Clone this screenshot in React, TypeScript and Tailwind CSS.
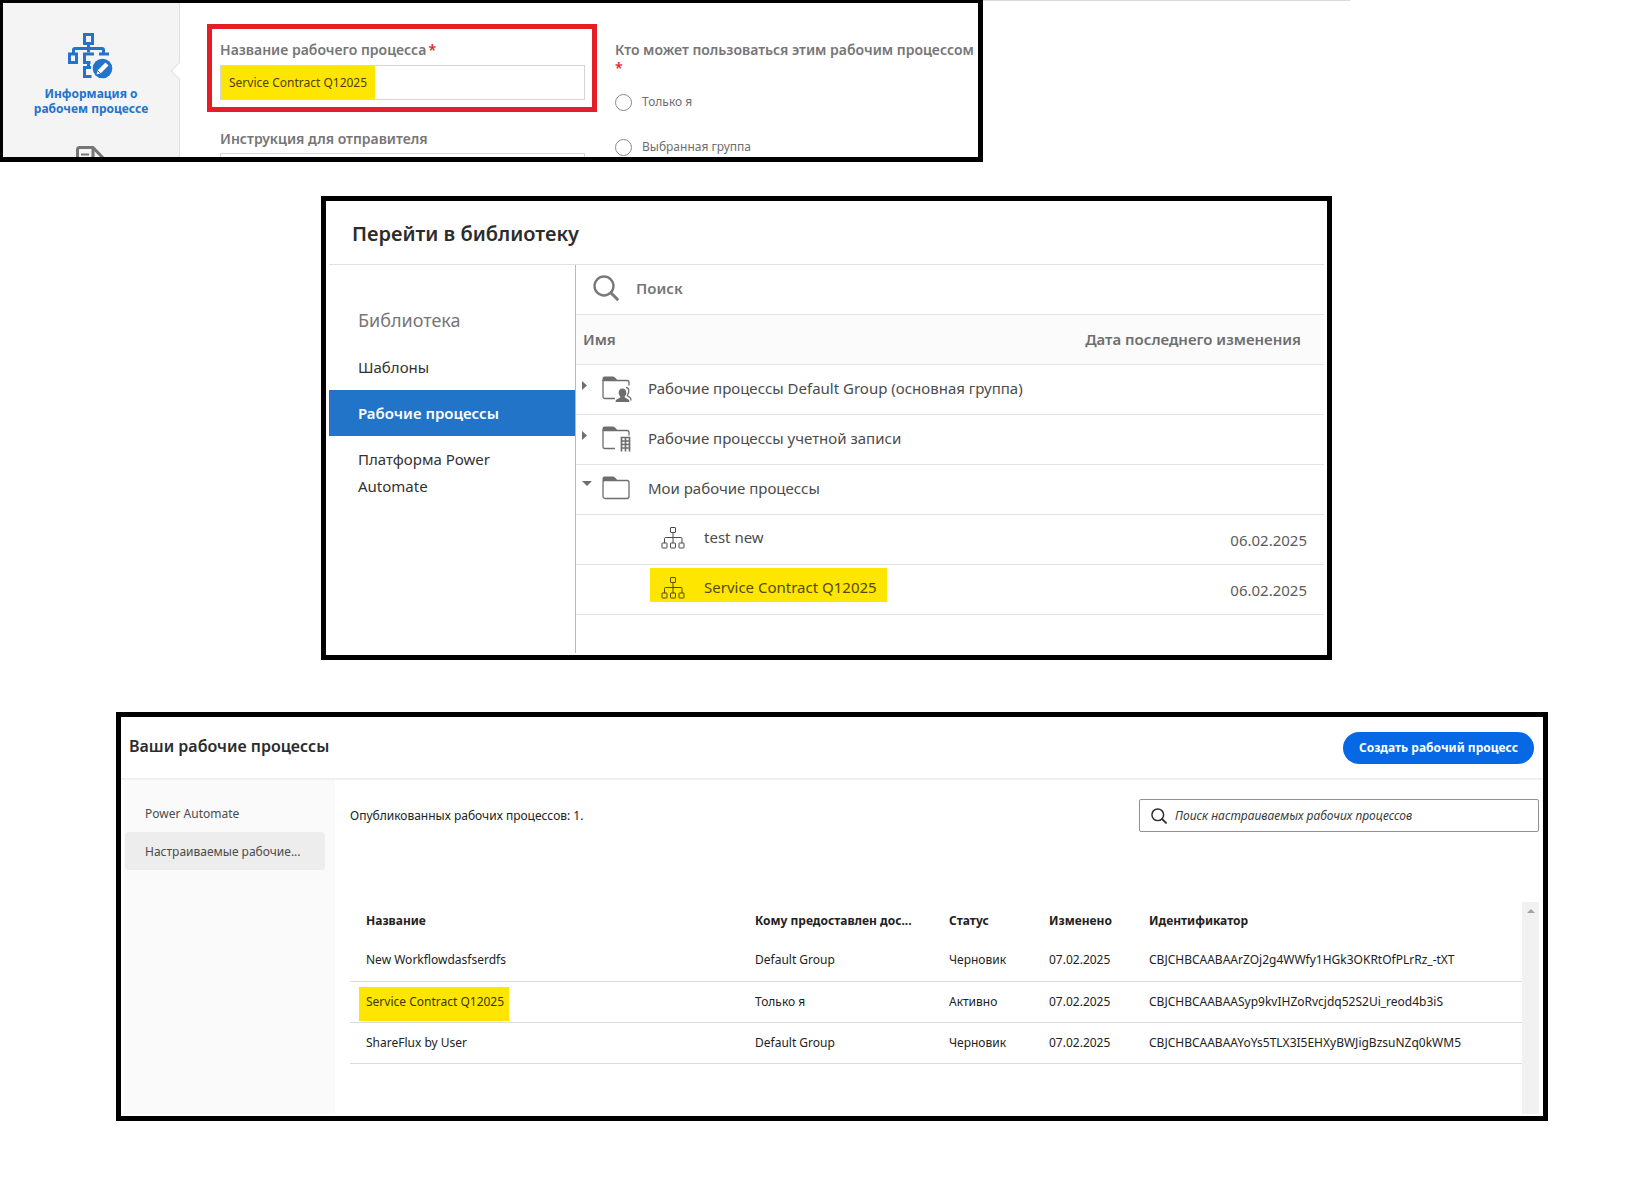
import type { ReactNode } from "react";

const workflows = [
  {
    name: "New Workflowdasfserdfs",
    sharedWith: "Default Group",
    status: "Черновик",
    modified: "07.02.2025",
    id: "CBJCHBCAABAArZOj2g4WWfy1HGk3OKRtOfPLrRz_-tXT",
  },
  {
    name: "Service Contract Q12025",
    sharedWith: "Только я",
    status: "Активно",
    modified: "07.02.2025",
    id: "CBJCHBCAABAASyp9kvIHZoRvcjdq52S2Ui_reod4b3iS",
    highlighted: true,
  },
  {
    name: "ShareFlux by User",
    sharedWith: "Default Group",
    status: "Черновик",
    modified: "07.02.2025",
    id: "CBJCHBCAABAAYoYs5TLX3I5EHXyBWJigBzsuNZq0kWM5",
  },
];

const folders = [
  { name: "Рабочие процессы Default Group (основная группа)", badge: "group", open: false },
  { name: "Рабочие процессы учетной записи", badge: "account", open: false },
  { name: "Мои рабочие процессы", badge: "none", open: true },
];

const libraryItems = [
  { name: "test new", date: "06.02.2025", highlighted: false },
  { name: "Service Contract Q12025", date: "06.02.2025", highlighted: true },
];

function WorkflowInfoIcon() {
  return (
    <svg width="46" height="46" viewBox="0 0 46 46" fill="none" aria-hidden="true">
      <g stroke="#2273c9" strokeWidth="3">
        <path d="M16.5 1.5h8v9h-8z" />
        <path d="M20.5 10.5v9" />
        <path d="M5.5 20v-3q0-1.5 1.5-1.5h27q1.5 0 1.5 1.5v3" />
        <path d="M1.5 21h7v8.500h-7z" />
        <path d="M26 21h-9.500v8.500h6" />
        <path d="M31 21h10" />
        <path d="M20.5 29.500v5M24 34.500h-7.500v9h7" />
      </g>
      <circle cx="34.5" cy="35.5" r="11.500" fill="#f4f4f4" />
      <circle cx="34.5" cy="35.5" r="9.800" fill="#2273c9" />
      <path d="M28.500 41.500l1.500-4.500 7.500-7.500 3 3-7.500 7.500z" fill="#fff" />
      <path d="M30 38l2 2" stroke="#2273c9" strokeWidth="1" />
    </svg>
  );
}

function DocumentIcon() {
  return (
    <svg width="30" height="32" viewBox="0 0 30 32" fill="none" stroke="#767676" aria-hidden="true">
      <path d="M1.500 31V3.500q0-2 2-2H17L28 13v18" strokeWidth="3" />
      <path d="M17 1.500V13h11" strokeWidth="3" />
      <path d="M5 8.500h8M5 13h8" strokeWidth="2" />
    </svg>
  );
}

function SearchIcon({ className }: { className: string }) {
  return (
    <svg className={className} viewBox="0 0 26 26" fill="none" stroke="currentColor" aria-hidden="true">
      <circle cx="11" cy="11" r="9.500" strokeWidth="2.400" />
      <path d="M17.800 17.800l6.500 6.500" strokeWidth="3" strokeLinecap="round" />
    </svg>
  );
}

function FolderIcon({ badge }: { badge: string }) {
  return (
    <svg width="30" height="28" viewBox="0 0 30 28" fill="none" aria-hidden="true">
      <path d="M.5 5V2.500Q.5.500 2.500.500h8.500q1.500 0 2.500 1.500l2.500 3z" fill="#6e6e6e" />
      {badge === "none" ? (
        <rect x="1" y="4.500" width="26" height="18" rx="2" stroke="#6e6e6e" strokeWidth="1.300" />
      ) : (
        <path
          d="M13 22.500H3q-2 0-2-2V4.500h24q2 0 2 2v3"
          stroke="#6e6e6e"
          strokeWidth="1.300"
        />
      )}
      {badge === "group" && (
        <g fill="#6e6e6e">
          <path d="M20.500 12.500c2.600 0 3.800 1.900 3.800 4.200 0 1.800-.8 2.900-1.500 3.600v1.200l3.700 2q1 .6 1 2.500h-14q0-1.900 1-2.500l3.700-2v-1.200c-.7-.7-1.500-1.800-1.500-3.600 0-2.300 1.200-4.200 3.800-4.200z" />
          <path
            d="M24 11.500c2 .3 3 2 2.800 4-.1 1.600-.8 2.500-1.300 3.200v1.300l2.700 1.800q.8.700.8 2.700"
            stroke="#6e6e6e"
            strokeWidth="1.300"
            fill="none"
          />
        </g>
      )}
      {badge === "account" && (
        <path
          d="M19.500 11v14.500M23.500 11v14.500M27.500 11v14.500M18.700 11.500h9.600M18.700 15h9.600M18.700 18.500h9.600M18.700 22h9.600"
          stroke="#6e6e6e"
          strokeWidth="1.700"
        />
      )}
    </svg>
  );
}

function TreeIcon() {
  return (
    <svg width="25" height="22" viewBox="0 0 25 22" fill="none" stroke="currentColor" aria-hidden="true">
      <rect x="9.500" y=".5" width="5" height="5" rx=".5" />
      <rect x="1" y="16" width="5" height="5" rx=".5" />
      <rect x="9.500" y="16" width="5" height="5" rx=".5" />
      <rect x="18" y="16" width="5" height="5" rx=".5" />
      <path d="M12 5.500V16M3.500 16v-4.500q0-1 1-1h15.500q1 0 1 1V16" />
    </svg>
  );
}

function Radio({ label }: { label: string }) {
  return (
    <label className="flex h-[18px] items-center gap-[10px] text-[12px] text-[#6e6e6e]">
      <input
        type="radio"
        name="audience"
        className="h-[17px] w-[17px] appearance-none rounded-full border border-[#8a8a8a] bg-white"
      />
      {label}
    </label>
  );
}

function WorkflowForm() {
  return (
    <section className="flex h-[162px] min-w-0 flex-1 overflow-hidden border-t-3 border-r-5 border-b-5 border-l-3 border-black">
      <nav className="relative flex w-[177px] shrink-0 flex-col items-center border-r border-[#e0e0e0] bg-[#f4f4f4] pt-[30px]">
        <a href="#info" className="flex flex-col items-center text-center text-[12px] leading-[15px] font-bold text-[#2273c9]">
          <WorkflowInfoIcon />
          <span className="mt-[7px] w-[130px]">Информация о рабочем процессе</span>
        </a>
        <a href="#documents" aria-label="Документы" className="mt-[30px]">
          <DocumentIcon />
        </a>
        <span className="absolute top-[62px] -right-[6px] h-3 w-3 rotate-45 border-b border-l border-[#e0e0e0] bg-white" />
      </nav>
      <div className="flex min-w-0 flex-1">
        <div className="ml-[27px] w-[390px] shrink-0 pt-[21px]">
          <div className="h-[88px] border-5 border-[#e31e26] pt-[11px] pr-[7px] pl-2">
            <label htmlFor="workflow-name" className="block text-[14px] leading-[20px] font-semibold text-[#767676]">
              Название рабочего процесса<span className="ml-[2px] text-[#e31e26]">*</span>
            </label>
            <div className="mt-[5px] flex h-[35px] border border-[#d5d5d5]">
              <input
                id="workflow-name"
                defaultValue="Service Contract Q12025"
                className="w-[154px] bg-[#ffe600] px-2 text-[12px] text-[#4b4000] outline-none"
              />
            </div>
          </div>
          <div className="pt-[17px] pr-3 pl-[13px]">
            <label htmlFor="instruction" className="block text-[14px] leading-[20px] font-semibold text-[#767676]">
              Инструкция для отправителя
            </label>
            <textarea id="instruction" className="mt-1 h-16 w-full resize-none border border-[#d5d5d5]" />
          </div>
        </div>
        <fieldset className="ml-[18px] min-w-0 flex-1 pt-[38px]">
          <legend className="float-left text-[14px] leading-[18px] font-semibold whitespace-nowrap text-[#767676]">
            Кто может пользоваться этим рабочим процессом
            <br />
            <span className="text-[#e31e26]">*</span>
          </legend>
          <div className="clear-both flex flex-col gap-[27px] pt-4">
            <Radio label="Только я" />
            <Radio label="Выбранная группа" />
          </div>
        </fieldset>
      </div>
    </section>
  );
}

function LibraryLink({ active, children }: { active?: boolean; children: ReactNode }) {
  return (
    <a
      href="#library"
      className={
        active
          ? "block bg-[#2174c8] pt-[10px] pr-10 pb-[9px] pl-[29px] font-semibold text-white"
          : "block pt-[10px] pr-10 pb-[9px] pl-[29px] text-[#323232]"
      }
    >
      {children}
    </a>
  );
}

function LibraryPanel() {
  return (
    <section className="mr-[309px] ml-[321px] flex h-[464px] flex-col border-5 border-black px-[3px] text-[15px]">
      <h2 className="flex h-[64px] shrink-0 items-center border-b border-[#e1e1e1] pt-[2px] pl-[23px] text-[20px] font-semibold text-[#2c2c2c]">
        Перейти в библиотеку
      </h2>
      <div className="mb-[2px] flex flex-1">
        <nav className="w-[247px] shrink-0 border-r border-[#b9b9b9] pt-[42px] leading-[27px]">
          <h3 className="mb-[10px] pl-[29px] text-[18px] text-[#767676]">Библиотека</h3>
          <LibraryLink>Шаблоны</LibraryLink>
          <LibraryLink active>Рабочие процессы</LibraryLink>
          <LibraryLink>Платформа Power Automate</LibraryLink>
        </nav>
        <div className="min-w-0 flex-1">
          <label className="flex h-[50px] items-center gap-[17px] border-b border-[#e3e3e3] pb-[3px] pl-[17px] text-[#7a7a7a]">
            <SearchIcon className="h-[26px] w-[26px]" />
            <input
              type="search"
              placeholder="Поиск"
              className="min-w-0 flex-1 font-semibold outline-none placeholder:text-[#767676]"
            />
          </label>
          <table className="w-full border-collapse text-[#4b4b4b]">
            <thead>
              <tr className="h-[49px] border-b border-[#e3e3e3] bg-[#fbfbfb] text-[#6e6e6e]">
                <th className="pl-[7px] text-left font-semibold">Имя</th>
                <th className="pr-[23px] text-right font-semibold">Дата последнего изменения</th>
              </tr>
            </thead>
            <tbody>
              {folders.map((folder) => (
                <tr key={folder.name} className="h-[50px] border-b border-[#e3e3e3]">
                  <td colSpan={2}>
                    <button type="button" className="flex items-center pl-[6px] text-left">
                      <svg width="10" height="10" viewBox="0 0 10 10" fill="#6e6e6e" className="mb-2" aria-hidden="true">
                        {folder.open ? <path d="M0 1h10L5 6z" /> : <path d="M0 1l5 4.500L0 10z" />}
                      </svg>
                      <span className="mr-4 ml-[10px] pt-px">
                        <FolderIcon badge={folder.badge} />
                      </span>
                      <span className="pb-[2px]">{folder.name}</span>
                    </button>
                  </td>
                </tr>
              ))}
              {libraryItems.map((item) => (
                <tr key={item.name} className="h-[50px] border-b border-[#e3e3e3]">
                  <td className="pl-[74px] align-top">
                    <div
                      className={
                        item.highlighted
                          ? "mt-[3px] flex h-[34px] w-fit items-center gap-[18px] bg-[#ffe600] pt-[7px] pr-[10px] pb-px pl-[11px] text-[#544b00]"
                          : "mt-[3px] flex h-[34px] w-fit items-center gap-[18px] pt-[7px] pr-[10px] pb-px pl-[11px]"
                      }
                    >
                      <TreeIcon />
                      {item.name}
                    </div>
                  </td>
                  <td className="pt-[2px] pr-[17px] text-right text-[#5c5c5c]">{item.date}</td>
                </tr>
              ))}
            </tbody>
          </table>
        </div>
      </div>
    </section>
  );
}

function WorkflowsPanel() {
  return (
    <section className="mr-[93px] ml-[116px] flex h-[409px] flex-col border-5 border-black text-[12px] text-[#222222]">
      <header className="flex h-[63px] shrink-0 items-center justify-between border-b-2 border-[#f0f0f0] pr-[9px] pl-2">
        <h2 className="pb-1 text-[16px] font-semibold text-[#2c2c2c]">Ваши рабочие процессы</h2>
        <button type="button" className="h-8 rounded-full bg-[#0668e4] px-4 text-[12px] font-bold text-white">
          Создать рабочий процесс
        </button>
      </header>
      <div className="mb-[2px] flex min-h-0 flex-1">
        <nav className="ml-[3px] w-[211px] shrink-0 bg-[#fafafa] pt-[14px] text-[12px] text-[#4b4b4b]">
          <a href="#power-automate" className="flex h-[38px] items-center pt-px pl-[21px]">
            Power Automate
          </a>
          <a href="#custom" className="mr-[10px] ml-px flex h-[38px] items-center rounded bg-[#ededed] pt-px pl-5">
            Настраиваемые рабочие...
          </a>
        </nav>
        <div className="flex min-w-0 flex-1 flex-col pr-1 pl-[15px]">
          <div className="mt-[19px] flex h-[33px] shrink-0 items-center justify-between">
            <p>Опубликованных рабочих процессов: 1.</p>
            <label className="flex h-[33px] w-[400px] items-center gap-2 rounded-[2px] border border-[#909090] px-[11px] text-[#2c2c2c]">
              <SearchIcon className="h-4 w-4" />
              <input
                type="search"
                placeholder="Поиск настраиваемых рабочих процессов"
                className="min-w-0 flex-1 italic outline-none placeholder:text-[#3a3a3a]"
              />
            </label>
          </div>
          <div className="mt-[70px] flex min-h-0 flex-1">
            <div className="min-w-0 flex-1">
              <table className="w-full table-fixed border-collapse text-left">
                <colgroup>
                  <col />
                  <col className="w-[194px]" />
                  <col className="w-[100px]" />
                  <col className="w-[100px]" />
                  <col className="w-[389px]" />
                </colgroup>
                <thead>
                  <tr className="h-[38px] font-bold">
                    <th className="pl-4">Название</th>
                    <th className="pl-4">Кому предоставлен дос...</th>
                    <th className="pl-4">Статус</th>
                    <th className="pl-4">Изменено</th>
                    <th className="pl-4">Идентификатор</th>
                  </tr>
                </thead>
                <tbody>
                  {workflows.map((w) => (
                    <tr key={w.id} className="h-[41px] border-b border-[#dcdcdc]">
                      <td className="pl-[9px]">
                        {w.highlighted ? (
                          <div className="mt-[5px] h-[34px] w-[150px] bg-[#ffe600] pl-[7px] leading-[30px] text-[#3d3600]">
                            {w.name}
                          </div>
                        ) : (
                          <div className="pl-[7px]">{w.name}</div>
                        )}
                      </td>
                      <td className="pl-4">{w.sharedWith}</td>
                      <td className="pl-4">{w.status}</td>
                      <td className="pl-4">{w.modified}</td>
                      <td className="pl-4">{w.id}</td>
                    </tr>
                  ))}
                </tbody>
              </table>
            </div>
            <div className="flex w-[17px] shrink-0 justify-center bg-[#f1f1f1] pt-[7px]">
              <svg width="8" height="4" viewBox="0 0 8 4" fill="#a3a3a3" aria-hidden="true">
                <path d="M0 4l4-4 4 4z" />
              </svg>
            </div>
          </div>
        </div>
      </div>
    </section>
  );
}

export default function App() {
  return (
    <main className="bg-white pb-[68px] font-['Noto_Sans','Open_Sans',sans-serif]">
      <div className="flex">
        <WorkflowForm />
        <div className="mr-[291px] h-px w-[367px] bg-[#d9d9d9]" />
      </div>
      <div className="mt-[34px] mb-[52px]">
        <LibraryPanel />
      </div>
      <WorkflowsPanel />
    </main>
  );
}
